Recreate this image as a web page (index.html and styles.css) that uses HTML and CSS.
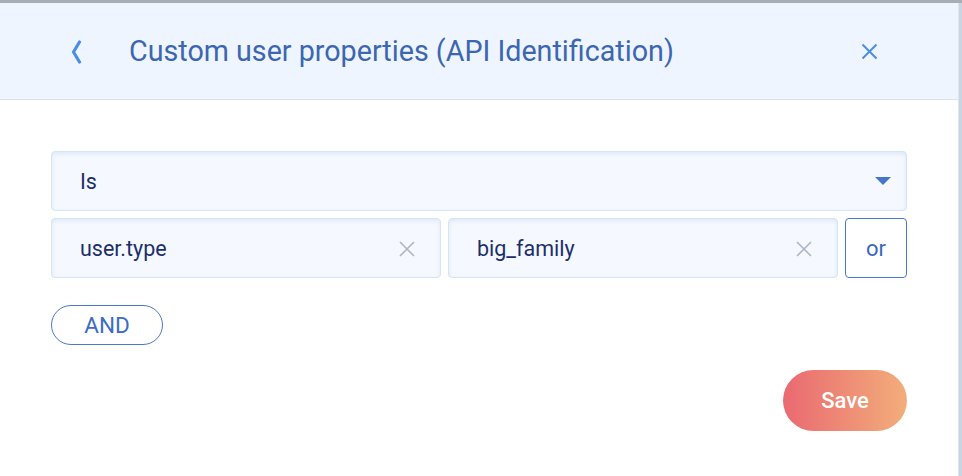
FILE: index.html
```html
<!DOCTYPE html>
<html>
<head>
    <link rel="stylesheet" href="styles.css">
</head>
<body>
    <div class="window">
        <div class="panel">
            <!-- Header -->
            <div class="header">
                <span class="back">
                    <svg width="12" height="24" viewBox="0 0 12 24"><path d="M9.5 2 L3.5 12 L9.5 22" fill="none" stroke="#4a8fe0" stroke-width="3.2" stroke-linecap="round" stroke-linejoin="round"/></svg>
                </span>
                <h3 class="title">Custom user properties (API Identification)</h3>
                <span class="close">
                    <svg width="17" height="17" viewBox="0 0 17 17"><path d="M1.5 1.5 L15.5 15.5 M15.5 1.5 L1.5 15.5" stroke="#4a8fe0" stroke-width="2"/></svg>
                </span>
            </div>

            <div class="content">
                <!-- Operator select -->
                <div class="field select">
                    <span class="value">Is</span>
                    <span class="caret"></span>
                </div>

                <!-- Key / value row -->
                <div class="row">
                    <div class="field">
                        <span class="value">user.type</span>
                        <svg class="clear" width="16" height="16" viewBox="0 0 16 16"><path d="M1 1 L15 15 M15 1 L1 15" stroke="#aab6c8" stroke-width="1.6"/></svg>
                    </div>
                    <div class="field">
                        <span class="value">big_family</span>
                        <svg class="clear" width="16" height="16" viewBox="0 0 16 16"><path d="M1 1 L15 15 M15 1 L1 15" stroke="#aab6c8" stroke-width="1.6"/></svg>
                    </div>
                    <button class="or-button">or</button>
                </div>

                <button class="and-button">AND</button>

                <div class="footer">
                    <button class="save-button">Save</button>
                </div>
            </div>
        </div>
        <div class="scroll-strip"></div>
    </div>
</body>
</html>
```
FILE: styles.css
```css
html, body {
    margin: 0;
    padding: 0;
    height: 100%;
}
body {
    font-family: Roboto, "Liberation Sans", sans-serif;
    background: #ffffff;
    border-top: 3px solid #a9aeb4;
    box-sizing: border-box;
}
.window {
    display: flex;
    height: 100%;
}
.panel {
    flex: 1;
    display: flex;
    flex-direction: column;
}
/* Header bar */
.header {
    height: 97px;
    background-color: #eef5fe;
    border-bottom: 1px solid #d7e3f0;
    display: flex;
    align-items: center;
    padding-left: 70px;
    padding-right: 80px;
    box-sizing: border-box;
}
.back {
    display: flex;
    width: 59px;
    margin-top: 1px;
}
.title {
    flex: 1;
    margin: 0;
    font-size: 28.7px;
    font-weight: 400;
    color: #3d66b1;
}
.close {
    display: flex;
    margin-top: 1px;
}
.content {
    padding: 51px 51px 0 51px;
}
/* Inputs */
.field {
    height: 60px;
    box-sizing: border-box;
    background-color: #f5f9ff;
    border: 1px solid #d6e4f6;
    border-radius: 4px;
    box-shadow: inset 0 2px 4px rgba(190, 210, 240, 0.45);
    display: flex;
    align-items: center;
    padding-left: 28px;
    padding-right: 25px;
}
.value {
    flex: 1;
    font-size: 21.5px;
    color: #1d2e6c;
}
.caret {
    width: 0;
    height: 0;
    border-left: 8px solid transparent;
    border-right: 8px solid transparent;
    border-top: 8px solid #4674c8;
    margin-right: -10px;
    margin-top: -1px;
}
.row {
    display: flex;
    gap: 7px;
    margin-top: 7px;
}
.row .field {
    flex: 1;
}
.clear {
    margin-top: 1px;
}
.or-button {
    width: 62px;
    height: 60px;
    background: #ffffff;
    border: 1px solid #4a78cb;
    border-radius: 4px;
    font-family: inherit;
    font-size: 22px;
    color: #3a68c0;
    padding: 0;
}
.and-button {
    display: block;
    margin-top: 27px;
    width: 112px;
    height: 40px;
    background: #ffffff;
    border: 1px solid #4a78cb;
    border-radius: 20px;
    font-family: inherit;
    font-size: 22.5px;
    color: #3a6cc8;
    padding: 0;
}
.footer {
    display: flex;
    justify-content: flex-end;
    margin-top: 25px;
}
.save-button {
    width: 124px;
    height: 61px;
    border: none;
    border-radius: 31px;
    background: linear-gradient(90deg, #ea6971, #f2ae7a);
    color: #ffffff;
    font-family: inherit;
    font-size: 22px;
    font-weight: 500;
    padding: 0;
}
/* Right edge strip */
.scroll-strip {
    width: 3px;
    background-color: #c9d5e3;
    border-left: 1px solid #dfe6ee;
}
```
